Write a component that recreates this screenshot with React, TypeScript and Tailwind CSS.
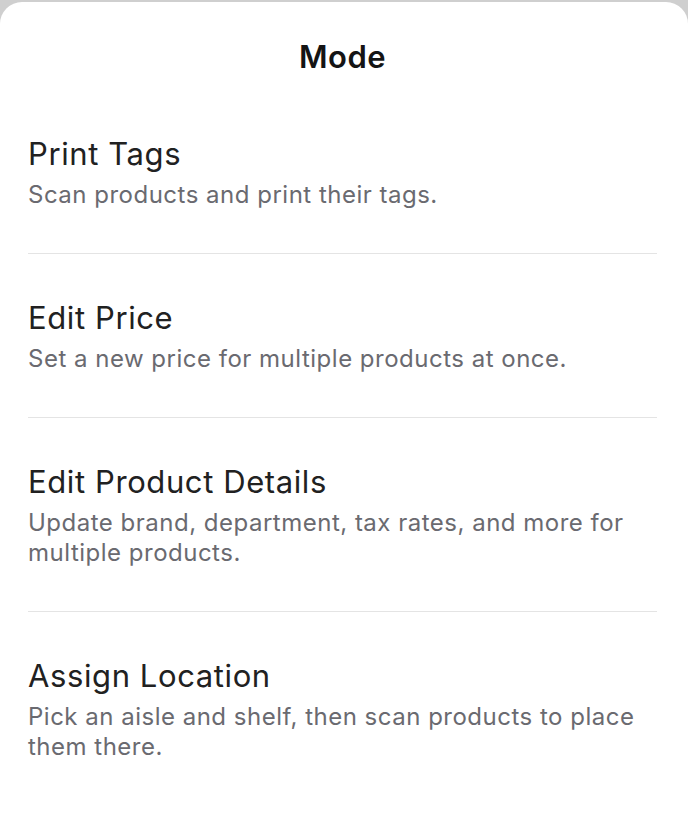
import React from "react";

const items = [
  { title: "Print Tags", desc: "Scan products and print their tags." },
  { title: "Edit Price", desc: "Set a new price for multiple products at once." },
  {
    title: "Edit Product Details",
    desc: "Update brand, department, tax rates, and more for multiple products.",
  },
  {
    title: "Assign Location",
    desc: "Pick an aisle and shelf, then scan products to place them there.",
  },
];

export default function App() {
  return (
    <div className="w-[688px] h-[838px] bg-[#cfcfcf] overflow-hidden">
      <div
        className="mt-[2px] h-[836px] bg-white rounded-t-[22px] px-[28px] pr-[31px]"
        style={{ fontFamily: "Inter, 'Noto Sans', sans-serif" }}
      >
        <div className="pt-[37px] h-[88px] text-center">
          <h1 className="text-[31px] leading-[36px] font-semibold tracking-[0.5px] text-[#141414]">
            Mode
          </h1>
        </div>
        <div className="flex flex-col">
          {items.map((it, i) => (
            <div
              key={it.title}
              className={
                "pt-[45px] pb-[43px] flex flex-col gap-[7px] " +
                (i < items.length - 1 ? "border-b border-[#e4e4e4]" : "")
              }
            >
              <div className="text-[31px] leading-[38px] tracking-[0.6px] text-[#212121]">{it.title}</div>
              <div className="text-[24px] leading-[30px] tracking-[0.5px] text-[#6a6a70] pr-[10px]">{it.desc}</div>
            </div>
          ))}
        </div>
      </div>
    </div>
  );
}
